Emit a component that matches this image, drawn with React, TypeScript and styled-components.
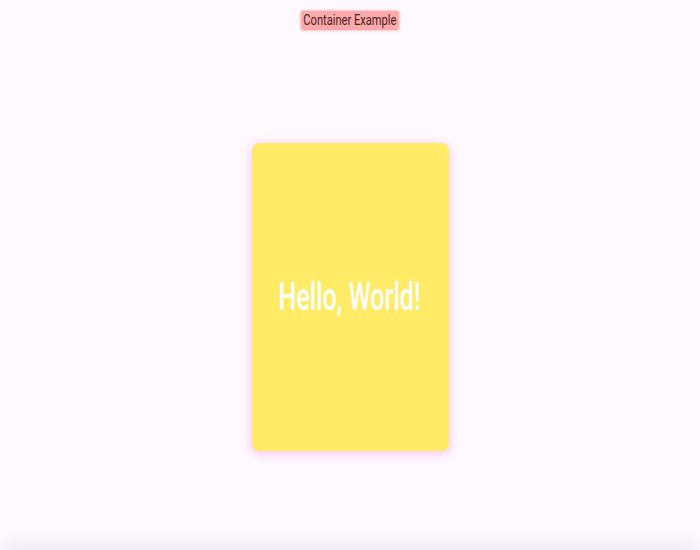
import React from "react";
import styled, { createGlobalStyle } from "styled-components";

const Global = createGlobalStyle`
  html, body { margin: 0; padding: 0; }
  body {
    background: #fef8ff;
    font-family: Roboto, "Noto Sans", sans-serif;
    overflow: hidden;
  }
`;

const Page = styled.div`
  height: 550px;
  display: flex;
  flex-direction: column;
  background: #fef8ff;
`;

const AppBar = styled.header`
  height: 44px;
  display: flex;
  justify-content: center;
  align-items: flex-start;
  padding-top: 11px;
  box-sizing: border-box;
`;

const Title = styled.h1`
  margin: 0;
  display: inline-block;
  font-size: 15px;
  font-weight: 400;
  line-height: 19px;
  color: #4a1d22;
  transform: scaleX(0.74);
  background: rgba(250, 150, 150, 0.8);
  border-radius: 3px;
  padding: 0 3px;
  box-shadow: 0 0 2px 1px rgba(250, 150, 150, 0.5);
`;

const Body = styled.main`
  flex: 1;
  display: flex;
  align-items: center;
  justify-content: center;
`;

const Card = styled.div`
  width: 197px;
  height: 308px;
  background: #ffeb65;
  border-radius: 8px;
  box-shadow: 0 2px 8px 1px rgba(240, 140, 220, 0.45);
  display: flex;
  align-items: center;
  justify-content: center;
`;

const Hello = styled.span`
  display: inline-block;
  font-size: 38px;
  font-weight: 500;
  color: #ffffff;
  transform: scaleX(0.66);
  white-space: nowrap;
`;

const BottomEdge = styled.footer`
  height: 0;
  margin: 0 10px;
  border-radius: 12px;
  box-shadow: 0 0 16px 6px rgba(60, 40, 70, 0.09);
`;

export default function App() {
  return (
    <Page>
      <Global />
      <AppBar>
        <Title>Container Example</Title>
      </AppBar>
      <Body>
        <Card>
          <Hello>Hello, World!</Hello>
        </Card>
      </Body>
      <BottomEdge />
    </Page>
  );
}
